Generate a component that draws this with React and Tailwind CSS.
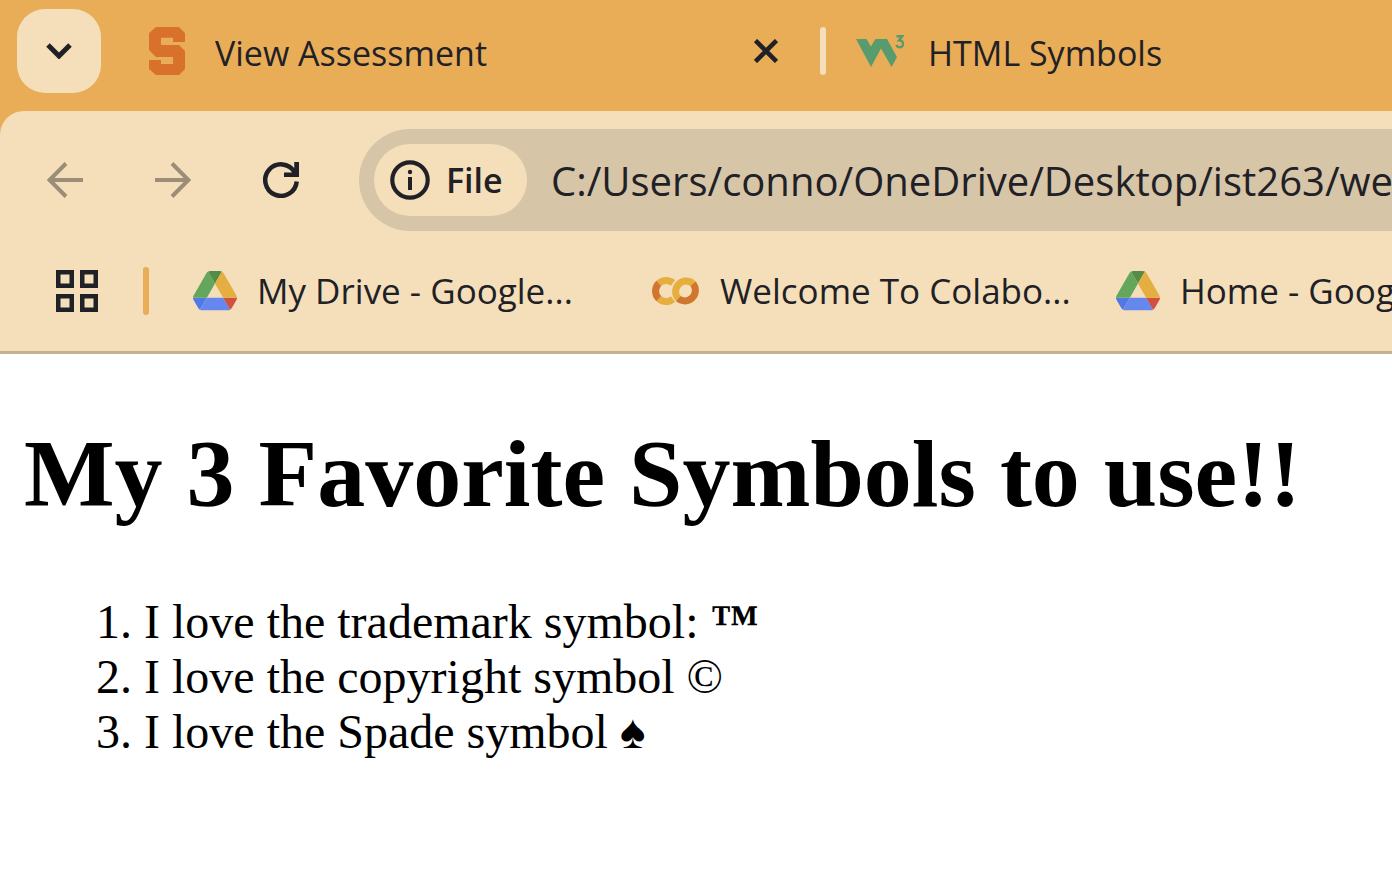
import React from "react";

function DriveIcon() {
  return (
    <svg className="w-11 shrink-0" viewBox="0 0 87.3 78" aria-hidden="true">
      <path fill="#5078e6" d="m6.6 66.85 3.85 6.65c.8 1.4 1.95 2.5 3.3 3.3l13.75-23.8h-27.5c0 1.55.4 3.1 1.2 4.5z" />
      <path fill="#65a65d" d="m43.65 25-13.75-23.8c-1.35.8-2.5 1.9-3.3 3.3l-25.4 44a9.06 9.06 0 0 0 -1.2 4.5h27.5z" />
      <path fill="#d2513e" d="m73.55 76.8c1.35-.8 2.5-1.9 3.3-3.3l1.6-2.75 7.65-13.25c.8-1.4 1.2-2.95 1.2-4.5h-27.502l5.852 11.5z" />
      <path fill="#548c46" d="m43.65 25 13.75-23.8c-1.35-.8-2.9-1.2-4.5-1.2h-18.5c-1.6 0-3.15.45-4.5 1.2z" />
      <path fill="#6688ee" d="m59.8 53h-32.3l-13.75 23.8c1.35.8 2.9 1.2 4.5 1.2h50.8c1.6 0 3.15-.45 4.5-1.2z" />
      <path fill="#e4ae40" d="m73.4 26.5-12.7-22c-.8-1.4-1.95-2.5-3.3-3.3l-13.75 23.8 16.15 28h27.45c0-1.55-.4-3.1-1.2-4.5z" />
    </svg>
  );
}

function ColabIcon() {
  return (
    <svg className="w-12 h-12 shrink-0" viewBox="0 0 48 48" fill="none" strokeWidth="7" aria-hidden="true">
      <path stroke="#e6ae3e" d="M21.200 16.200A10.500 10.500 0 0 0 6.800 16.400M6.800 31.600A10.500 10.500 0 0 0 21.200 31.800" />
      <path stroke="#d1762f" d="M6.800 16.400A10.500 10.500 0 0 0 6.800 31.600" />
      <circle cx="33.500" cy="24" r="15" fill="#f4dfba" />
      <path stroke="#d1762f" d="M40.900 16.600A10.500 10.500 0 0 1 26.100 31.400" />
      <path stroke="#e6ae3e" d="M26.100 31.400A10.500 10.500 0 0 1 40.900 16.600" />
    </svg>
  );
}

function Arrow({ forward }) {
  return (
    <svg className="size-9" viewBox="0 0 36 36" fill="none" stroke="currentColor" strokeWidth="4" aria-hidden="true">
      {forward ? (
        <path d="M0 18H33M17 1.5L33.5 18L17 34.5" />
      ) : (
        <path d="M36 18H3M19 1.5L2.5 18L19 34.5" />
      )}
    </svg>
  );
}

function Bookmark({ icon, children }) {
  return (
    <a href="#" className="flex items-center gap-5 shrink-0">
      {icon}
      <span>{children}</span>
    </a>
  );
}

export default function App() {
  return (
    <div className="min-h-screen overflow-hidden bg-white">
      <div className="bg-[#e9ad58] font-['Open_Sans',sans-serif] text-[34px] leading-[48px] text-[#1f2126] whitespace-nowrap">
        <header className="flex h-[111px] items-start pt-[9px] pl-[17px]">
          <button aria-label="Search tabs" className="grid size-[84px] shrink-0 place-items-center rounded-[28px] bg-[#f4dfba]">
            <svg className="w-[26px] h-4" viewBox="0 0 26 16" fill="none" stroke="currentColor" strokeWidth="5" aria-hidden="true">
              <path d="M2 2L13 13L24 2" />
            </svg>
          </button>
          <div className="flex h-[84px] w-[719px] shrink-0 items-center pl-12">
            <svg className="w-9 h-12 shrink-0" viewBox="0 0 36 48" fill="#d8712c" aria-hidden="true">
              <path d="M7 0H30L36 6V15H24V10.700H12V18H30L36 24V42L30 48H7L0 42V33H12V37H24V30H7L0 23V6Z" />
            </svg>
            <a href="#" className="ml-[30px] grow pt-1">View Assessment</a>
            <button aria-label="Close tab" className="mr-[42px]">
              <svg className="size-6" viewBox="0 0 24 24" fill="none" stroke="currentColor" strokeWidth="4.500" aria-hidden="true">
                <path d="M1.500 1.500L22.500 22.500M22.500 1.500L1.500 22.500" />
              </svg>
            </button>
          </div>
          <div className="flex h-[84px] items-center">
            <div className="h-12 w-1.5 rounded-sm bg-[#f4dfba]" />
            <svg className="ml-[30px] size-12 shrink-0" viewBox="0 0 48 48" fill="#579b6f" aria-hidden="true">
              <path d="M0 12H10.500L14.800 19.500L19.500 12H31L41 30L35.600 40L25 21.500L15 40Z" />
              <path fill="none" stroke="#579b6f" strokeWidth="2.400" d="M40.500 9.200H46.200L43 13.400C48.500 13.400 48 20.300 43.800 20.300Q41.300 20.300 40.300 18" />
            </svg>
            <a href="#" className="ml-6 pt-1">HTML Symbols</a>
          </div>
        </header>

        <div className="rounded-tl-3xl border-b-[3px] border-[#c3b196] bg-[#f4dfba] pt-[18px]">
          <nav aria-label="Navigation" className="flex h-[102px] items-center pl-[47px]">
            <button aria-label="Back" className="shrink-0 text-[#9c8d78]"><Arrow /></button>
            <button aria-label="Forward" className="ml-[72px] shrink-0 text-[#9c8d78]"><Arrow forward /></button>
            <button aria-label="Reload" className="ml-[72px] shrink-0">
              <svg className="size-9" viewBox="0 0 36 36" fill="none" stroke="currentColor" strokeWidth="4.500" aria-hidden="true">
                <path d="M33.700 19.500A15.750 15.750 0 1 1 31.500 10M21 12.750H33.750V0" />
                <path fill="currentColor" stroke="none" d="M27 4L31.500 7V0H36V15H28L30 11Z" />
              </svg>
            </button>
            <div className="ml-[60px] flex h-[102px] min-w-0 grow items-center overflow-hidden rounded-l-full bg-[#d6c5a7] pl-[15px]">
              <button className="flex h-[72px] w-[153px] shrink-0 items-center gap-4 rounded-full bg-[#f4dfba] pl-4 font-semibold">
                <svg className="size-10" viewBox="0 0 40 40" aria-hidden="true">
                  <circle cx="20" cy="20" r="17.700" fill="none" stroke="currentColor" strokeWidth="4.200" />
                  <circle cx="20" cy="12" r="2.200" fill="currentColor" />
                  <path fill="currentColor" d="M18 17H22V30H18Z" />
                </svg>
                File
              </button>
              <input
                aria-label="Address"
                readOnly
                defaultValue="C:/Users/conno/OneDrive/Desktop/ist263/week"
                className="ml-6 h-16 min-w-0 grow bg-transparent text-[40px] outline-none"
              />
            </div>
          </nav>
          <nav aria-label="Bookmarks" className="flex h-[120px] items-center overflow-hidden pl-14 text-[35px]">
            <button aria-label="Apps" className="shrink-0">
              <svg className="size-[42px]" viewBox="0 0 42 42" fill="none" stroke="currentColor" strokeWidth="4.500" aria-hidden="true">
                <path d="M2.250 2.250H15.750V15.750H2.250ZM26.250 2.250H39.750V15.750H26.250ZM2.250 26.250H15.750V39.750H2.250ZM26.250 26.250H39.750V39.750H26.250Z" />
              </svg>
            </button>
            <div className="mr-11 ml-[45px] h-12 w-1.5 shrink-0 rounded-full bg-[#e9ad58]" />
            <div className="w-[459px] shrink-0"><Bookmark icon={<DriveIcon />}>My Drive - Google...</Bookmark></div>
            <div className="w-[464px] shrink-0"><Bookmark icon={<ColabIcon />}>Welcome To Colabo...</Bookmark></div>
            <Bookmark icon={<DriveIcon />}>Home - Google Drive</Bookmark>
          </nav>
        </div>
      </div>

      <main className="px-6 pt-16 font-['Liberation_Serif',serif] text-black">
        <h1 className="text-[96px] leading-[112px] font-bold">My 3 Favorite Symbols to use!!</h1>
        <ol className="mt-16 list-decimal pl-[120px] text-5xl leading-[55px]">
          <li>I love the trademark symbol: <span className="font-bold">™</span></li>
          <li>I love the copyright symbol ©</li>
          <li>I love the Spade symbol ♠</li>
        </ol>
      </main>
    </div>
  );
}
